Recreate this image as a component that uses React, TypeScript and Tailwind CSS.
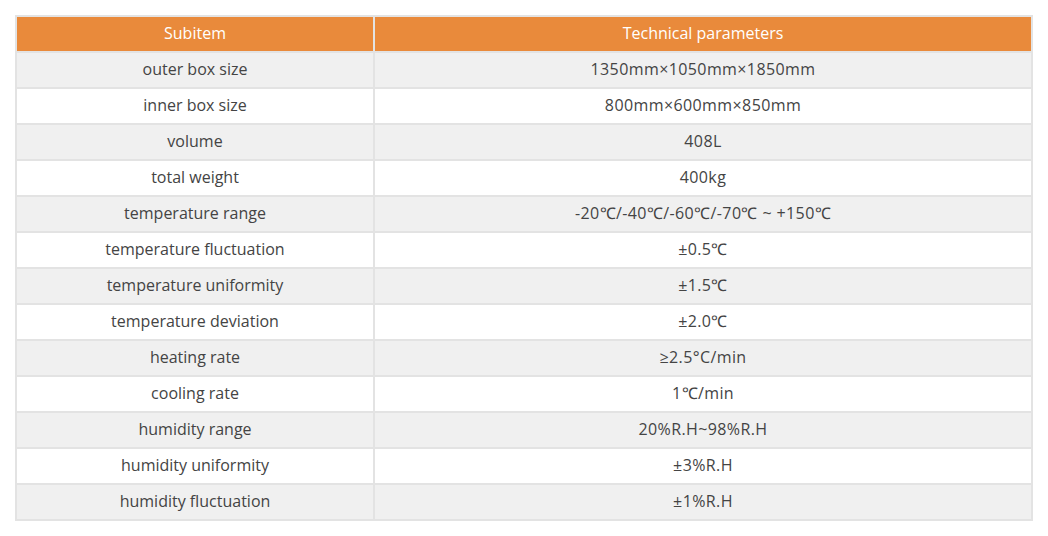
const rows: [string, string][] = [
  ['outer box size', '1350mm×1050mm×1850mm'],
  ['inner box size', '800mm×600mm×850mm'],
  ['volume', '408L'],
  ['total weight', '400kg'],
  ['temperature range', '-20℃/-40℃/-60℃/-70℃ ~ +150℃'],
  ['temperature fluctuation', '±0.5℃'],
  ['temperature uniformity', '±1.5℃'],
  ['temperature deviation', '±2.0℃'],
  ['heating rate', '≥2.5°C/min'],
  ['cooling rate', '1℃/min'],
  ['humidity range', '20%R.H~98%R.H'],
  ['humidity uniformity', '±3%R.H'],
  ['humidity fluctuation', '±1%R.H'],
]

export default function App() {
  return (
    <div className="w-[1048px] h-[536px] bg-white pt-[15px] pl-[15px] font-['Open_Sans',sans-serif]">
      <table className="w-[1018px] border-collapse border-2 border-[#e3e3e3] text-[16px] leading-[20px] text-[#444]">
        <thead>
          <tr className="bg-[#e98a3b] text-white h-[36px]">
            <th className="w-[358px] border-2 border-[#e3e3e3] font-normal p-0 pb-[2px]">Subitem</th>
            <th className="border-2 border-[#e3e3e3] font-normal p-0 pb-[2px]">Technical parameters</th>
          </tr>
        </thead>
        <tbody>
          {rows.map(([k, v], i) => (
            <tr key={k} className={i % 2 === 0 ? 'bg-[#f0f0f0] h-[36px]' : 'bg-white h-[36px]'}>
              <td className="border-2 border-[#e3e3e3] text-center p-0 pb-[2px]">{k}</td>
              <td className="border-2 border-[#e3e3e3] text-center p-0 pb-[2px] tracking-[0.4px]">{v}</td>
            </tr>
          ))}
        </tbody>
      </table>
    </div>
  )
}
